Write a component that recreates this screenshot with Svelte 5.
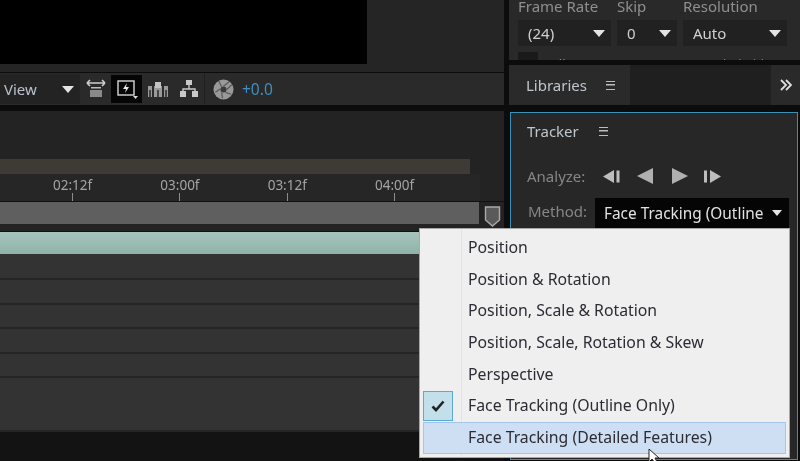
<script>
const ruler = ["02:12f", "03:00f", "03:12f", "04:00f"];
const rows = [26, 25, 24, 25, 24, 54];
const methods = [
	"Position",
	"Position & Rotation",
	"Position, Scale & Rotation",
	"Position, Scale, Rotation & Skew",
	"Perspective",
	"Face Tracking (Outline Only)",
	"Face Tracking (Detailed Features)"
];
const checked = 5;
const hovered = 6;
</script>

<div class="app">
	<div class="left">
		<div class="preview"><div class="viewer"></div></div>
		<div class="toolbar">
			<div class="view-select"><span>View</span><i class="arrow"></i></div>
			<button class="tool">
				<svg width="22" height="22" viewBox="0 0 22 22"><path d="M2 5h18M2 5l3-3M2 5l3 3M20 5l-3-3M20 5l-3 3" fill="none" stroke="#cfcfcf" stroke-width="1.6"/><rect x="6" y="9" width="10" height="1.500" fill="#bbb"/><rect x="5" y="12" width="12" height="7" fill="#8a8a8a"/></svg>
			</button>
			<button class="tool active">
				<svg width="22" height="22" viewBox="0 0 22 22"><rect x="2" y="3" width="16" height="14" fill="none" stroke="#d8d8d8" stroke-width="1.4"/><path d="M11 5l-4 6h3l-1 4 4-6h-3z" fill="#e6e6e6"/><path d="M17 18h5l-2.500 3z" fill="#d8d8d8"/></svg>
			</button>
			<button class="tool">
				<svg width="22" height="22" viewBox="0 0 22 22"><path d="M1 8h4v11H1zM7 8h8v11H7zM17 8h4v11h-4z" fill="#9a9a9a"/><path d="M8 4h6v6H8z" fill="#c4c4c4"/><path d="M3 12v7M11 12v7M19 12v7" stroke="#2a2a2a" stroke-width="1.500"/></svg>
			</button>
			<button class="tool">
				<svg width="22" height="22" viewBox="0 0 22 22"><path d="M8 2h6v5H8zM2 13h6v6H2zM14 13h6v6h-6z" fill="#c8c8c8"/><path d="M11 7v4M5 13v-2h12v2" fill="none" stroke="#c8c8c8" stroke-width="1.400"/></svg>
			</button>
			<span class="divider"></span>
			<svg class="aperture" width="21" height="21" viewBox="0 0 22 22"><circle cx="11" cy="11" r="10.500" fill="#999"/><circle cx="11" cy="11" r="3.200" fill="#3a3a3a"/><path d="M11 7.500L17 3M14.500 11l5-5M13 14l6 2M9 14l1 6M7.500 10.500l-5 3.500M9 8L6 2" stroke="#5a5a5a" stroke-width="1.300"/></svg>
			<span class="exposure">+0.0</span>
		</div>
		<div class="timeline">
			<div class="work-bar"></div>
			<div class="ruler">
				{#each ruler as label}
					<div class="mark"><span>{label}</span><i></i></div>
				{/each}
			</div>
			<div class="scrub">
				<div class="scrub-bar"></div>
				<svg class="marker" width="17" height="21" viewBox="0 0 17 21"><path d="M1.500 1h14v13l-7 6-7-6z" fill="#5a5a5a" stroke="#aaa" stroke-width="1.400"/></svg>
			</div>
			<div class="clip"></div>
			{#each rows as h}
				<div class="row" style="height: {h}px"></div>
			{/each}
			<div class="foot"></div>
		</div>
	</div>

	<div class="right">
		<div class="preview-panel">
			<div class="fields">
				<label class="field w-rate">Frame Rate<span class="select">(24)<i class="arrow"></i></span></label>
				<label class="field w-skip">Skip<span class="select">0<i class="arrow"></i></span></label>
				<label class="field w-res">Resolution<span class="select">Auto<i class="arrow"></i></span></label>
			</div>
			<div class="clipped"><span class="box"></span><span class="grey">Full Screen</span><span class="link">Extended Video</span></div>
		</div>
		<div class="tabs">
			<div class="tab">Libraries <span class="burger"></span></div>
			<div class="tab-fill"></div>
			<div class="more">
				<svg width="14" height="12" viewBox="0 0 14 12"><path d="M2 1l5 5-5 5M7 1l5 5-5 5" fill="none" stroke="#ddd" stroke-width="1.800"/></svg>
			</div>
		</div>
		<div class="tracker">
			<div class="title">Tracker <span class="burger"></span></div>
			<div class="analyze">
				<span class="lbl">Analyze:</span>
				<svg width="18" height="13" viewBox="0 0 18 13"><path d="M11 0v13L0 6.500z" fill="#bdbdbd"/><rect x="13.500" y="0.500" width="3" height="12" fill="#bdbdbd"/></svg>
				<svg width="18" height="16" viewBox="0 0 18 16"><path d="M17 0v16L1 8z" fill="#b0b0b0"/></svg>
				<svg width="18" height="16" viewBox="0 0 18 16"><path d="M1 0v16l16-8z" fill="#b0b0b0"/></svg>
				<svg width="18" height="13" viewBox="0 0 18 13"><rect x="1" y="0.500" width="3" height="12" fill="#bdbdbd"/><path d="M7 0v13l11-6.500z" fill="#bdbdbd"/></svg>
			</div>
			<div class="method">
				<span class="lbl">Method:</span>
				<div class="method-select"><span>Face Tracking (Outline</span><i class="arrow"></i></div>
			</div>
		</div>
	</div>

	<ul class="menu">
		{#each methods as m, i}
			<li class:hover={i === hovered}>
				<span class="check" class:on={i === checked}>
					{#if i === checked}
						<svg width="14" height="12" viewBox="0 0 14 12"><path d="M1.500 6.500l3.500 3.500 7.500-8.500" fill="none" stroke="#222" stroke-width="2.600"/></svg>
					{/if}
				</span>
				<span class="text">{m}</span>
			</li>
		{/each}
	</ul>
	<svg class="cursor" width="14" height="14" viewBox="0 0 14 14"><path d="M1 0v13l3-3 3 4 2-1-2-4h4z" fill="#fff" stroke="#222" stroke-width="1"/></svg>
</div>

<style>
:global(body) {
	margin: 0;
	background: #0c0c0c;
}
.app {
	position: relative;
	display: flex;
	justify-content: space-between;
	width: 800px;
	height: 461px;
	overflow: hidden;
	background: #0c0c0c;
	font-family: "Noto Sans", "Open Sans", sans-serif;
	font-size: 15px;
	color: #cfcfcf;
	filter: blur(0.55px);
}
i {
	display: block;
}
.arrow {
	width: 0;
	height: 0;
	border-left: 6.500px solid transparent;
	border-right: 6.500px solid transparent;
	border-top: 7px solid #e4e4e4;
}

.left {
	width: 504px;
	display: flex;
	flex-direction: column;
}
.preview {
	height: 72px;
	background: #252525;
}
.viewer {
	width: 367px;
	height: 64px;
	background: #000;
}
.toolbar {
	height: 32px;
	margin-top: 1px;
	margin-bottom: 6px;
	display: flex;
	align-items: center;
	background: #2a2a2a;
}
.view-select {
	width: 80px;
	height: 30px;
	box-sizing: border-box;
	padding: 0 6px 0 4px;
	display: flex;
	align-items: center;
	justify-content: space-between;
	background: #232323;
	color: #b9c2cc;
}
.tool {
	width: 31px;
	height: 28px;
	padding: 0;
	border: 0;
	background: none;
	display: flex;
	align-items: center;
	justify-content: center;
}
.tool.active {
	background: #050505;
}
.divider {
	width: 1px;
	height: 30px;
	margin-right: 8px;
	background: #1f1f1f;
}
.exposure {
	margin-left: 8px;
	font-size: 15.500px;
	color: #3f8fc4;
}

.timeline {
	flex: 1;
	display: flex;
	flex-direction: column;
	padding-top: 48px;
	background: #232323;
}
.work-bar {
	width: 470px;
	height: 15px;
	flex: none;
	background: #3e3a36;
}
.ruler {
	width: 480px;
	height: 27px;
	flex: none;
	box-sizing: border-box;
	padding-left: 19px;
	display: flex;
	background: #262626;
}
.mark {
	width: 107.300px;
	display: flex;
	flex-direction: column;
	align-items: center;
	justify-content: flex-end;
	font-size: 13.500px;
	line-height: 15px;
	color: #a5a5a5;
}
.mark i {
	width: 1px;
	height: 8px;
	background: #8d8d8d;
}
.scrub {
	display: flex;
	height: 22px;
	flex: none;
	border-top: 1px solid #111;
}
.scrub-bar {
	width: 479px;
	background: #5f5f5f;
}
.marker {
	margin: 4px 0 0 5px;
}
.clip {
	height: 22px;
	flex: none;
	margin-top: 7px;
	border-top: 1px solid #111;
	background: linear-gradient(#a6c4bd, #8fb3a9);
}
.row {
	flex: none;
	box-sizing: border-box;
	background: #333;
	border-bottom: 2px solid #252525;
}
.row:last-of-type {
	border-bottom: 0;
}
.foot {
	flex: 1;
	background: #131313;
}

.right {
	width: 291px;
	display: flex;
	flex-direction: column;
}
.preview-panel {
	height: 60px;
	flex: none;
	overflow: hidden;
	background: #292929;
}
.fields {
	display: flex;
	padding-left: 9px;
}
.field {
	display: flex;
	flex-direction: column;
	color: #8f8f8f;
	line-height: 12px;
}
.w-rate { width: 99px; }
.w-skip { width: 66px; }
.w-res { width: 104px; }
.select {
	height: 26px;
	display: flex;
	align-items: center;
	justify-content: space-between;
	box-sizing: border-box;
	padding: 0 6px 0 10px;
	margin-top: 8px;
	background: #212121;
	color: #d0d0d0;
}
.w-rate .select { width: 93px; }
.w-skip .select { width: 60px; }
.clipped {
	display: flex;
	align-items: flex-start;
	height: 14px;
	padding-left: 9px;
	margin-top: 6px;
	line-height: 14px;
	font-size: 13px;
}
.box {
	width: 20px;
	height: 8px;
	background: #1a1a1a;
}
.grey {
	margin: 5px 0 0 6px;
	color: #8f8f8f;
	width: 140px;
}
.link {
	margin-top: 5px;
	color: #3f8fc4;
}

.tabs {
	height: 40px;
	margin-top: 5px;
	flex: none;
	display: flex;
	background: #2a2a2a;
}
.tab {
	width: 121px;
	box-sizing: border-box;
	padding: 0 0 0 17px;
	display: flex;
	align-items: center;
	gap: 19px;
	color: #bfc6cc;
}
.tab-fill {
	flex: 1;
	background: #1f1f1f;
}
.more {
	width: 29px;
	display: flex;
	align-items: center;
	justify-content: center;
}
.burger {
	width: 9px;
	height: 9px;
	box-sizing: border-box;
	border-top: 1.500px solid #bbb;
	border-bottom: 1.500px solid #bbb;
	background: linear-gradient(#bbb, #bbb) center / 100% 1.500px no-repeat;
}
.tracker {
	flex: 1;
	margin: 7px 2px 1px 1px;
	box-sizing: border-box;
	padding: 0 8px 0 16px;
	border: 1px solid #3a8fb5;
	background: #272727;
}
.title {
	height: 36px;
	display: flex;
	align-items: center;
	gap: 20px;
	color: #bfc6cc;
}
.analyze {
	display: flex;
	align-items: center;
	gap: 14px;
	margin-top: 17px;
	height: 20px;
}
.analyze svg:nth-of-type(2) {
	margin-left: 1px;
}
.analyze svg:nth-of-type(3) {
	margin-left: 3px;
}
.lbl {
	color: #868686;
	width: 62px;
}
.method {
	display: flex;
	align-items: flex-start;
	margin-top: 12px;
}
.method .lbl {
	padding-top: 3px;
	margin-right: 5px;
	margin-left: 1px;
}
.method-select {
	width: 194px;
	height: 30px;
	box-sizing: border-box;
	padding: 0 7px 0 9px;
	display: flex;
	align-items: center;
	justify-content: space-between;
	background: #050505;
	color: #e2e2e2;
	font-size: 15.400px;
}
.method-select .arrow {
	border-left-width: 5.500px;
	border-right-width: 5.500px;
	border-top-width: 6px;
}

.menu {
	position: absolute;
	left: 419px;
	top: 228px;
	width: 371px;
	height: 230px;
	box-sizing: border-box;
	margin: 0;
	padding: 3px;
	list-style: none;
	border: 1px solid #a8a8a8;
	background: linear-gradient(#e3e3e3, #e3e3e3) 41px 0 / 1px 100% no-repeat, #efefef;
	color: #2b2b33;
	font-size: 15.800px;
}
.menu li {
	height: 31.700px;
	display: flex;
	align-items: center;
	box-sizing: border-box;
	border: 1px solid transparent;
}
.menu li.hover {
	background: #cfdff3;
	border-color: #a3c6ea;
}
.text {
	padding-bottom: 2px;
}
.check {
	width: 30px;
	height: 100%;
	margin: 0 15px 0 -1px;
	flex: none;
	box-sizing: border-box;
	display: flex;
	align-items: center;
	justify-content: center;
}
.check.on {
	background: #c3dfea;
	border: 1px solid #5aa9d9;
}
.cursor {
	position: absolute;
	left: 648px;
	top: 449px;
}
</style>
